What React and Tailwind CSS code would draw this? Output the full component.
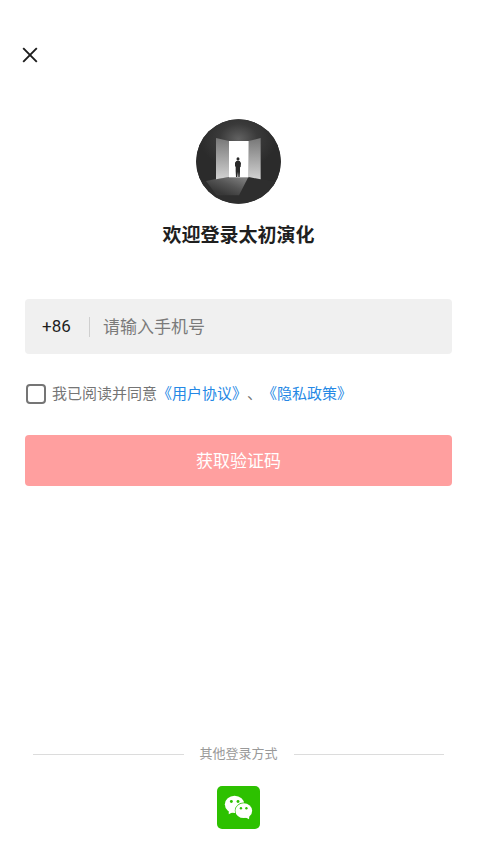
function CloseIcon() {
  return (
    <svg viewBox="0 0 16 16" className="h-4 w-4" fill="none" stroke="#1c1c1c" strokeWidth="1.9" aria-hidden="true">
      <path d="M1.2 1.2 14.8 14.8M14.8 1.2 1.2 14.8" />
    </svg>
  );
}

function Logo() {
  return (
    <svg viewBox="0 0 255 255" className="h-[85px] w-[85px]" role="img" aria-label="太初演化">
      <defs>
        <radialGradient id="glow" cx="0.5" cy="0.3" r="0.45">
          <stop offset="0" stopColor="#626262" />
          <stop offset="0.5" stopColor="#3a3a3a" />
          <stop offset="1" stopColor="#2b2b2b" />
        </radialGradient>
        <linearGradient id="door" x1="0" y1="0" x2="0" y2="1">
          <stop offset="0" stopColor="#777777" />
          <stop offset="1" stopColor="#d2d2d2" />
        </linearGradient>
        <linearGradient id="floor" x1="0.8" y1="0" x2="0.15" y2="0.7">
          <stop offset="0" stopColor="#7c7c7c" />
          <stop offset="0.5" stopColor="#565656" />
          <stop offset="1" stopColor="#383838" />
        </linearGradient>
        <clipPath id="disc">
          <circle cx="127.5" cy="127.5" r="127" />
        </clipPath>
      </defs>
      <g clipPath="url(#disc)">
        <rect width="255" height="255" fill="#2b2b2b" />
        <rect width="255" height="200" fill="url(#glow)" />
        <path d="M0 190 60 180 99 174H158L194 180 255 190V255H0V190Z" fill="#2e2e2e" />
        <path d="M30 186 60 180 99 174H157L129 229H62Z" fill="url(#floor)" />
        <path d="M60 57 99 66V174L60 181Z" fill="url(#door)" />
        <path d="M194 57 158 66V174L194 181Z" fill="url(#door)" />
        <rect x="99" y="66" width="59" height="109" fill="#ffffff" />
        <g fill="#292929">
          <ellipse cx="126" cy="120" rx="4.5" ry="5.5" />
          <path d="M121 126H131L135 132 134 144 132 145 132 158 131 174H127L126 158 124 174H120L119 157 119 144 117 141 117 131Z" />
        </g>
      </g>
    </svg>
  );
}

function WeChatIcon() {
  return (
    <svg viewBox="0 0 44 44" className="h-[43px] w-[43px]" aria-hidden="true">
      <g fill="#ffffff">
        <ellipse cx="18" cy="18.8" rx="10" ry="8.8" />
        <path d="M12 24 12 29 17.4 26Z" />
      </g>
      <ellipse cx="27.4" cy="25.2" rx="9.2" ry="8.3" fill="#2dc100" />
      <g fill="#ffffff">
        <ellipse cx="27.4" cy="25.2" rx="8.6" ry="7.6" />
        <path d="M33.2 29.5 32.8 34 28.5 31.8Z" />
      </g>
      <g fill="#2dc100">
        <circle cx="14.7" cy="15.8" r="1.5" />
        <circle cx="21.5" cy="15.8" r="1.5" />
        <circle cx="24.5" cy="22.8" r="1.2" />
        <circle cx="30.1" cy="22.8" r="1.2" />
      </g>
    </svg>
  );
}

export default function App() {
  return (
    <main className="flex min-h-screen flex-col bg-white px-[25px] pt-[46px] pb-[19px] font-[Roboto,'Noto_Sans_CJK_SC',sans-serif] text-[#1f1f1f]">
      <header className="flex">
        <button type="button" aria-label="关闭" className="-ml-1 flex p-px">
          <CloseIcon />
        </button>
      </header>

      <section className="mt-[55px] flex flex-col items-center">
        <Logo />
        <h1 className="mt-[18px] text-[19px] leading-7 font-bold">欢迎登录太初演化</h1>
      </section>

      <form className="mt-[49px] flex flex-col" onSubmit={(e) => e.preventDefault()}>
        <div className="flex h-[55px] items-center rounded bg-[#f0f0f0] px-[17px]">
          <label htmlFor="phone" className="w-[47px] text-[17px]">+86</label>
          <span className="h-5 w-px bg-[#cfcfcf]" />
          <input
            id="phone"
            type="tel"
            placeholder="请输入手机号"
            className="ml-[13px] min-w-0 flex-1 bg-transparent pt-0.5 text-[17px] outline-none placeholder:text-[#7a7a7a]"
          />
        </div>

        <div className="mt-7 flex items-center px-px text-[15px] leading-6 text-[#757575]">
          <input
            id="agree"
            type="checkbox"
            className="h-5 w-5 shrink-0 appearance-none rounded border-2 border-[#757575] bg-white checked:bg-[#757575]"
          />
          <p className="ml-1.5 [text-spacing-trim:space-all]">
            <label htmlFor="agree">我已阅读并同意</label>
            <a href="#terms" className="text-[#2588e5]">《用户协议》</a>
            <span>、</span>
            <a href="#privacy" className="text-[#2588e5]">《隐私政策》</a>
          </p>
        </div>

        <button type="submit" className="mt-[29px] h-[51px] rounded bg-[#ff9f9f] pt-0.5 text-[17px] text-white">
          获取验证码
        </button>
      </form>

      <footer className="mt-auto flex flex-col items-center px-2">
        <div className="flex w-full items-center gap-4">
          <span className="h-px flex-1 bg-[#dcdcdc]" />
          <span className="text-[13px] leading-5 text-[#999999]">其他登录方式</span>
          <span className="h-px flex-1 bg-[#dcdcdc]" />
        </div>
        <button type="button" aria-label="微信登录" className="mt-[22px] rounded-[5px] bg-[#2dc100]">
          <WeChatIcon />
        </button>
      </footer>
    </main>
  );
}
